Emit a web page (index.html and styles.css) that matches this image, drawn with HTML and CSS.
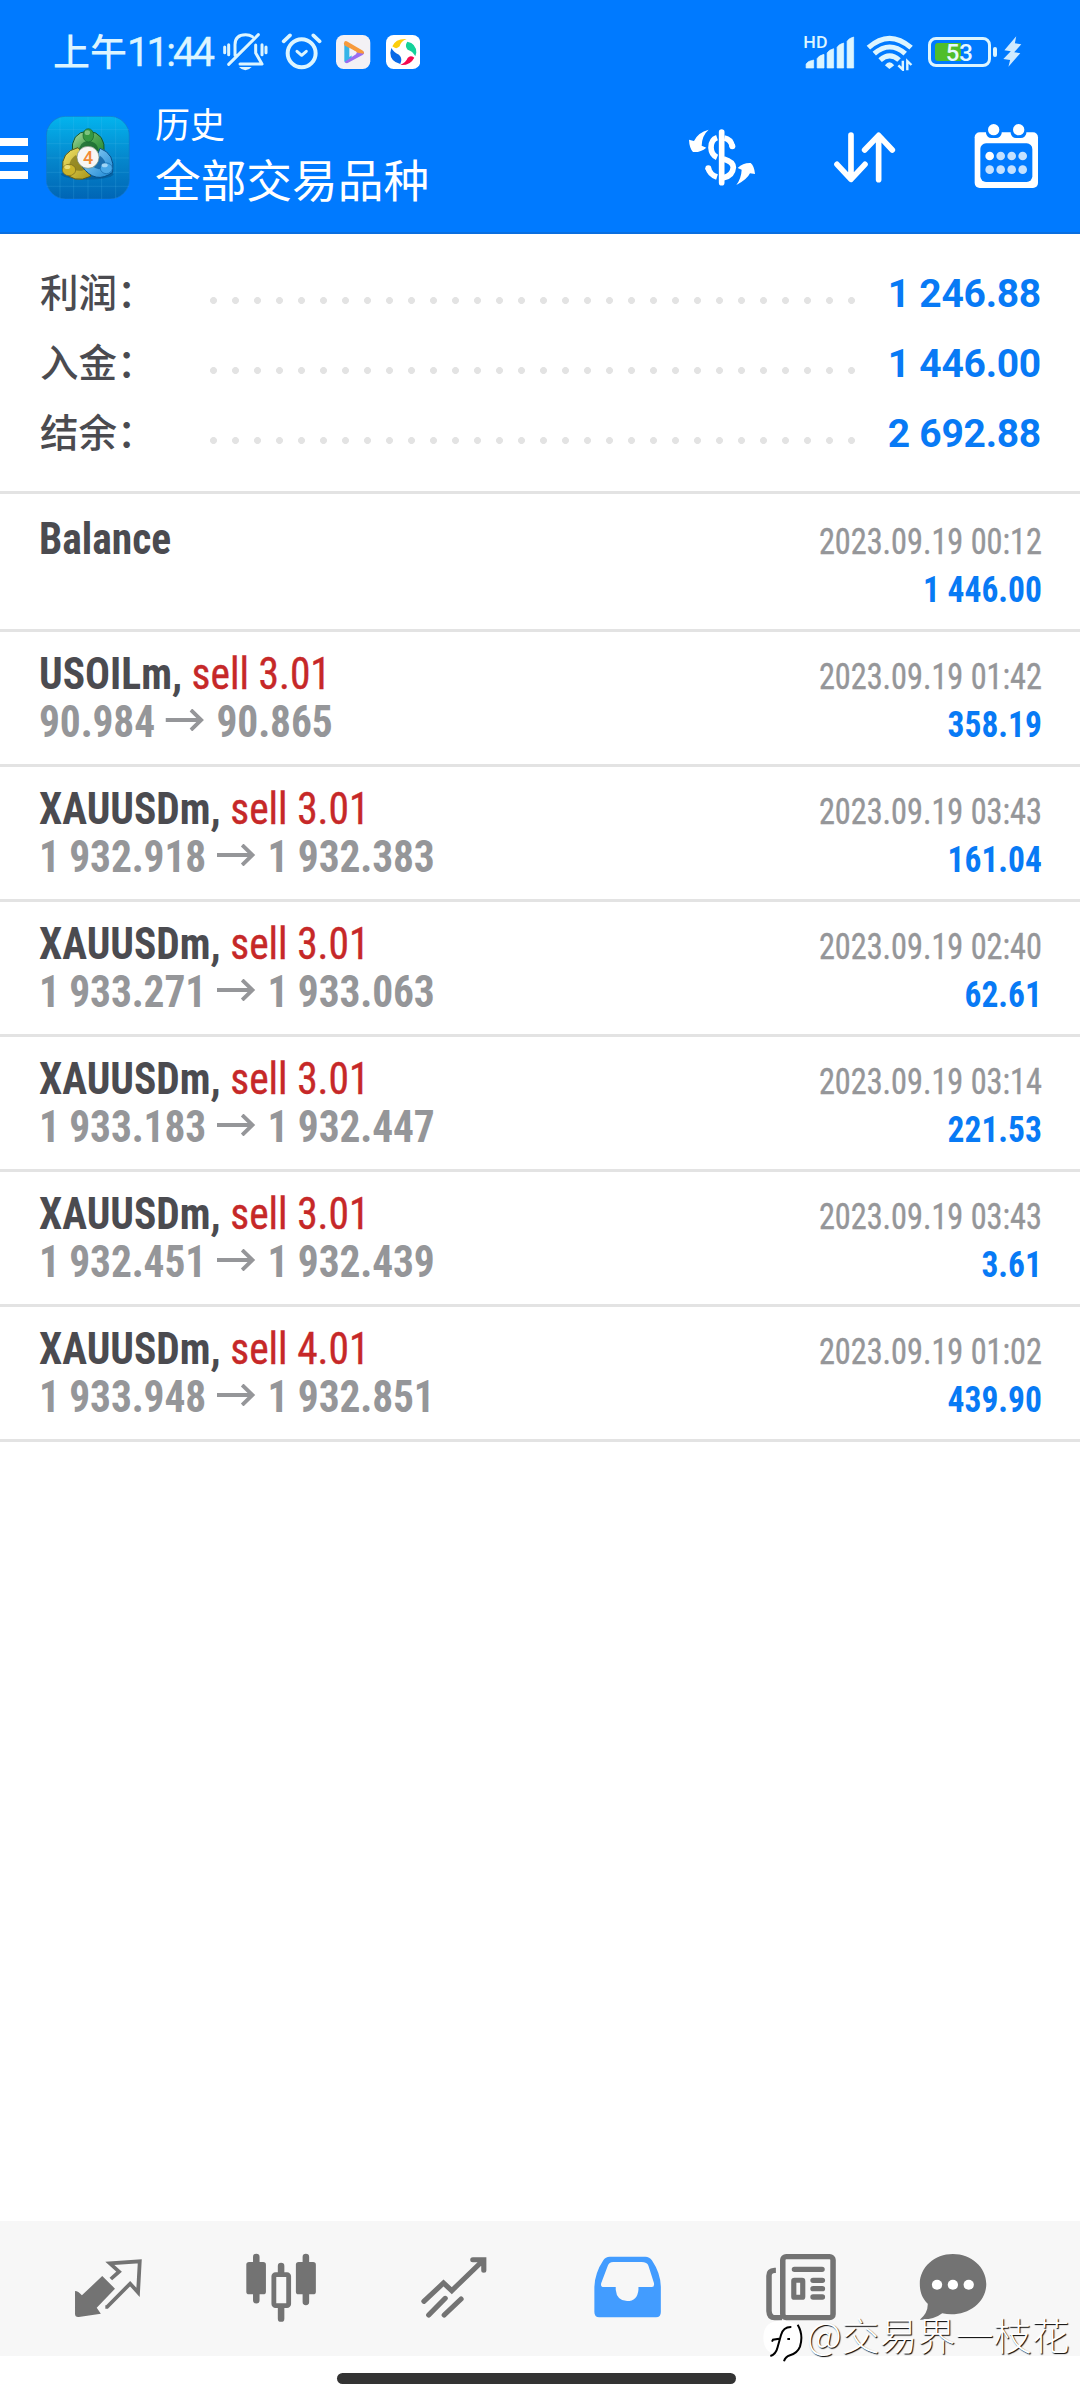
FILE: index.html
```html
<!DOCTYPE html>
<html lang="zh-CN">
<head>
<meta charset="utf-8">
<title>历史</title>
<link rel="stylesheet" href="styles.css">
</head>
<body>
<div class="screen">
  <header class="header">
    <div class="status">
      <span class="clock">上午<span class="digits">11:44</span></span>
      <svg class="bell" viewBox="20 38 140 120" fill="none" stroke="#dcf5ff" stroke-width="9" stroke-linecap="round" stroke-linejoin="round">
        <path d="M59 108V76q0-30 32-30 12 0 20 6M121 77v24l19 33H74M129 46 40 135M28 83v17M40 76v30M140 76v30M152 83v17"/>
        <path d="M71 143h38q-19 20-38 0z" fill="#dcf5ff" stroke="none"/>
      </svg>
      <svg class="alarm" viewBox="198 38 124 115" fill="none" stroke="#dcf5ff" stroke-width="12" stroke-linecap="round">
        <circle cx="260" cy="102" r="42"/>
        <path d="M206 66 225 48M314 66 295 48" stroke-width="11"/>
        <path d="M246 96l14 12 14-12" stroke-width="9" stroke-linejoin="round"/>
      </svg>
      <svg class="app" viewBox="363 45 103 102">
        <rect x="363" y="45" width="103" height="102" rx="23" fill="#f3f1f5"/>
        <path d="M388 68v54q0 8 8 5l14-8V82z" fill="#36b4e8"/>
        <path d="M447 96q2 5-3 8l-46 25q-6 2-9-4l35-23 2-16z" fill="#9b6df0"/>
        <path d="M387 70q1-10 11-5l46 27q5 4 2 9l-18-3-40-22z" fill="#f79a3c"/>
        <path d="M403 83v28l23-14z" fill="#f3f1f5"/>
      </svg>
      <svg class="app app-second" viewBox="512 45 103 102">
        <rect x="512" y="45" width="103" height="102" rx="23" fill="#fff"/>
        <path d="M531 79q10-24 43-22-18 7-21 22-10 11-22 0z" fill="#fcce0c"/>
        <path d="M576 65q27 5 27 33l-3 11q-8-16-23-20-10-11-1-24z" fill="#14d29a"/>
        <path d="M597 113q-12 24-42 22 17-8 22-21 8-10 20-1z" fill="#f5094f"/>
        <path d="M555 132q-30-8-30-34l3-14q8 14 23 20 12 12 4 28z" fill="#0a6ae6"/>
      </svg>
      <svg class="signal" viewBox="764 102 150 108" preserveAspectRatio="none">
        <text x="765" y="144" font-size="48" textLength="70" lengthAdjust="spacingAndGlyphs" class="hd">HD</text>
        <path d="M773 204v-12q4-9 22-12v24zM805 204v-28q4-9 20-13v41zM834 204v-45q4-9 19-13v58zM863 204v-62q4-9 19-13v75zM892 204v-80q4-9 19-13v93z" fill="#dcf5ff" stroke="#dcf5ff" stroke-width="2" stroke-linejoin="round"/>
      </svg>
      <svg class="wifi" viewBox="947 102 138 110" preserveAspectRatio="none" fill="none" stroke="#dcf5ff" stroke-width="15">
        <path d="M954 143q61-56 124 0M971 161q45-40 90 0M988 180q28-25 55 0"/>
        <path d="M1002 196q13-18 27 0l-14 11z" fill="#dcf5ff" stroke="none"/>
        <path d="M1054 182v27l-13-13M1067 211v-28l12 12" stroke-width="7"/>
      </svg>
      <div class="battery"><span class="level"></span><span class="percent">53</span></div>
      <span class="nub"></span>
      <svg class="bolt" viewBox="1346 109 56 94" preserveAspectRatio="none"><path d="M1385 110l-35 42 19 3-22 24 20 3-5 20 35-41-18-3 21-24-19-3z" fill="#cfeaff"/></svg>
    </div>
    <div class="toolbar">
      <div class="menu"><i></i><i></i><i></i></div>
      <svg class="logo" viewBox="138 47 252 250">
        <defs>
          <linearGradient id="sky" x1="0" y1="0" x2="0" y2="1"><stop offset="0" stop-color="#03b4ee"/><stop offset=".5" stop-color="#0588cd"/><stop offset="1" stop-color="#0065b5"/></linearGradient>
          <linearGradient id="green" x1="0" y1="0" x2="1" y2="1"><stop offset="0" stop-color="#b4e0a8"/><stop offset=".5" stop-color="#4fa653"/><stop offset="1" stop-color="#1b8430"/></linearGradient>
          <linearGradient id="gold" x1="0" y1="0" x2="1" y2="1"><stop offset="0" stop-color="#f2e468"/><stop offset="1" stop-color="#a99518"/></linearGradient>
          <linearGradient id="blue" x1="0" y1="0" x2="1" y2="1"><stop offset="0" stop-color="#9cd8fb"/><stop offset="1" stop-color="#1684d2"/></linearGradient>
        </defs>
        <rect x="139" y="48" width="249" height="248" rx="58" fill="url(#sky)" stroke="#1675c9" stroke-width="2"/>
        <path d="M180 50v244M221 49v247M264 49v247M305 49v247M347 50v244M140 88h247M140 130h247M140 173h247M140 216h247M140 258h247" stroke="#5cc5ee" stroke-opacity=".28" stroke-width="2"/>
        <ellipse cx="262" cy="222" rx="78" ry="16" fill="#04487f" opacity=".45"/>
        <path d="M217 158q-6-62 47-66 55 6 48 66l-18 14h-60z" fill="url(#green)" stroke="#12552e" stroke-width="3"/>
        <path d="M236 158q0-34 28-36 32 2 32 36z" fill="#17652f" opacity=".75"/>
        <path d="M234 142q-52 12-46 66 32 46 84 20l-6-48z" fill="url(#gold)" stroke="#565719" stroke-width="3"/>
        <path d="M228 164q-22 14-20 36 22 18 46 8z" fill="#7d7318" opacity=".7"/>
        <path d="M300 144q46 16 38 72-52 38-92-18l38-10z" fill="url(#blue)" stroke="#074d87" stroke-width="3"/>
        <path d="M300 166q20 14 16 34-22 14-38-2z" fill="#0a5b9c" opacity=".75"/>
        <ellipse cx="265" cy="105" rx="16" ry="20" fill="#359842" stroke="#14602c" stroke-width="2"/>
        <ellipse cx="207" cy="209" rx="20" ry="17" fill="#cbb42b" stroke="#71651a" stroke-width="2"/>
        <ellipse cx="319" cy="204" rx="18" ry="16" fill="#48a7e7" stroke="#1267a9" stroke-width="2"/>
        <ellipse cx="262" cy="97" rx="8" ry="7" fill="#9dd59a" opacity=".7"/>
        <ellipse cx="202" cy="200" rx="9" ry="6" fill="#f3e88c" opacity=".8"/>
        <ellipse cx="314" cy="195" rx="9" ry="6" fill="#b5e1fb" opacity=".8"/>
        <circle cx="264" cy="171" r="33" fill="#f8f6f4" stroke="#768c79" stroke-width="2"/>
        <text x="264" y="190" text-anchor="middle" class="four">4</text>
      </svg>
      <div class="titles"><div class="subtitle">历史</div><div class="title">全部交易品种</div></div>
      <svg class="act dollar" viewBox="24 38 204 198">
        <path d="M86 58Q54 66 42 92l-15-4q1 25 12 37 22 2 40-13l-14-6q1-31 21-48zM169 224q32-16 41-35l15 2q-2-24-13-33-23-1-39 15l12 5q-1 25-16 46z" fill="#fff"/>
        <path d="M125 65v152" stroke="#fff" stroke-width="17" stroke-linecap="round"/>
        <path d="M111 82q-18 6-18 30 1 22 18 29M84 172q5 21 27 28" fill="none" stroke="#fff" stroke-width="17"/>
        <circle cx="85" cy="174" r="9" fill="#fff"/>
        <path d="M133 83q19 3 24 25M131 146q28 8 29 25-2 26-29 31" fill="none" stroke="#fff" stroke-width="17"/>
        <circle cx="157" cy="108" r="9" fill="#fff"/>
      </svg>
      <svg class="act sort" viewBox="460 38 190 198" fill="none" stroke="#fff" stroke-width="17" stroke-linecap="round" stroke-linejoin="round"><path d="M514 74v132M472 162l42 45 42-45M597 208V76M555 119l42-44 41 44"/></svg>
      <svg class="act calendar" viewBox="883 38 194 198">
        <rect x="885" y="66" width="190" height="167" rx="15" fill="#fff"/>
        <rect x="902" y="99" width="156" height="116" rx="17" fill="#007aff"/>
        <path d="M919 62v7q3 14 16 14h14q14 0 17-14v-7zM993 62v7q3 14 16 14h14q14 0 17-14v-7z" fill="#007aff"/>
        <circle cx="942" cy="58" r="17" fill="#fff"/><circle cx="1017" cy="58" r="17" fill="#fff"/>
        <circle cx="930" cy="137" r="13" fill="#fff"/>
        <g fill="#c4e1ff"><circle cx="963" cy="137" r="13"/><circle cx="996" cy="137" r="13"/><circle cx="1029" cy="137" r="13"/><circle cx="930" cy="178" r="13"/><circle cx="963" cy="178" r="13"/><circle cx="996" cy="178" r="13"/><circle cx="1029" cy="178" r="13"/></g>
      </svg>
    </div>
  </header>

  <section class="summary">
    <div class="sum-row"><span class="label">利润：</span><span class="dots"></span><span class="total">1 246.88</span></div>
    <div class="sum-row"><span class="label">入金：</span><span class="dots"></span><span class="total">1 446.00</span></div>
    <div class="sum-row"><span class="label">结余：</span><span class="dots"></span><span class="total">2 692.88</span></div>
  </section>

  <main class="list">
    <div class="row"><div class="left"><div><b>Balance</b></div></div><div class="right"><div class="date">2023.09.19 00:12</div><div class="profit">1 446.00</div></div></div>
    <div class="row"><div class="left"><div><b>USOILm,</b> <span class="sell">sell 3.01</span></div><div class="prices">90.984<svg class="arrow" viewBox="0 0 42 22"><path d="M0 11H38M27 1l11 10-11 10"/></svg>90.865</div></div><div class="right"><div class="date">2023.09.19 01:42</div><div class="profit">358.19</div></div></div>
    <div class="row"><div class="left"><div><b>XAUUSDm,</b> <span class="sell">sell 3.01</span></div><div class="prices">1 932.918<svg class="arrow" viewBox="0 0 42 22"><path d="M0 11H38M27 1l11 10-11 10"/></svg>1 932.383</div></div><div class="right"><div class="date">2023.09.19 03:43</div><div class="profit">161.04</div></div></div>
    <div class="row"><div class="left"><div><b>XAUUSDm,</b> <span class="sell">sell 3.01</span></div><div class="prices">1 933.271<svg class="arrow" viewBox="0 0 42 22"><path d="M0 11H38M27 1l11 10-11 10"/></svg>1 933.063</div></div><div class="right"><div class="date">2023.09.19 02:40</div><div class="profit">62.61</div></div></div>
    <div class="row"><div class="left"><div><b>XAUUSDm,</b> <span class="sell">sell 3.01</span></div><div class="prices">1 933.183<svg class="arrow" viewBox="0 0 42 22"><path d="M0 11H38M27 1l11 10-11 10"/></svg>1 932.447</div></div><div class="right"><div class="date">2023.09.19 03:14</div><div class="profit">221.53</div></div></div>
    <div class="row"><div class="left"><div><b>XAUUSDm,</b> <span class="sell">sell 3.01</span></div><div class="prices">1 932.451<svg class="arrow" viewBox="0 0 42 22"><path d="M0 11H38M27 1l11 10-11 10"/></svg>1 932.439</div></div><div class="right"><div class="date">2023.09.19 03:43</div><div class="profit">3.61</div></div></div>
    <div class="row"><div class="left"><div><b>XAUUSDm,</b> <span class="sell">sell 4.01</span></div><div class="prices">1 933.948<svg class="arrow" viewBox="0 0 42 22"><path d="M0 11H38M27 1l11 10-11 10"/></svg>1 932.851</div></div><div class="right"><div class="date">2023.09.19 01:02</div><div class="profit">439.90</div></div></div>
  </main>

  <nav class="tabs">
    <svg viewBox="64 63 502.4 405" preserveAspectRatio="none">
      <path d="M297 228l37 38-53 57 12 18-64 10q-11 1-11-9v-69q9 0 20 13z" fill="#737373" stroke-linejoin="round"/>
      <path d="M322 237l24-22-27-25 87-6-5 93-23-26-67 70h-5" fill="none" stroke="#737373" stroke-width="11"/>
    </svg>
    <svg viewBox="566 63 502.4 405" preserveAspectRatio="none">
      <path d="M744 171v130M888 171v135M816 198v24M816 320v36" stroke="#737373" stroke-width="19" stroke-linecap="round"/>
      <rect x="715" y="186" width="57" height="97" rx="8" fill="#737373"/><rect x="859" y="186" width="58" height="97" rx="8" fill="#737373"/>
      <rect x="795" y="224" width="43" height="93" rx="5" fill="#f7f7f7" stroke="#737373" stroke-width="14"/>
    </svg>
    <svg viewBox="1068.7 63 502.4 405" preserveAspectRatio="none">
      <path d="M1231 304l57-55 24 23 90-90M1373 179h32v32M1245 345l48-50M1290 345l49-48" fill="none" stroke="#737373" stroke-width="15" stroke-linecap="round"/>
    </svg>
    <svg viewBox="3 63 502.4 405" preserveAspectRatio="none">
      <path d="M203 170h103q12 0 19 11 25 38 26 79v76q0 16-14 16H172q-14 0-14-16v-76q2-42 26-79 6-11 19-11z" fill="#429cff"/>
      <path d="M213 186h82q16 0 20 11l16 52q2 12-6 12h-39v8q-3 34-33 34-30-1-33-34v-8h-35q-10 0-7-12l19-52q3-10 16-11z" fill="#f7f7f7"/>
    </svg>
    <svg viewBox="505.3 63 505.3 405" preserveAspectRatio="none">
      <path d="M685 211h-4q-16 1-16 16v106q1 20 16 20h22" fill="none" stroke="#737373" stroke-width="16"/>
      <rect x="705" y="170" width="146" height="183" rx="10" fill="none" stroke="#737373" stroke-width="16"/>
      <path d="M739 208h80M793 241h27M793 266h27M793 291h27" stroke="#737373" stroke-width="16" stroke-linecap="round"/>
      <rect x="737" y="241" width="26" height="51" rx="2" fill="#f7f7f7" stroke="#737373" stroke-width="15"/>
    </svg>
    <svg viewBox="1010.6 63 377.5 405" preserveAspectRatio="none">
      <path d="M1199 162c53 0 97 39 97 90 0 62-65 103-128 88q-24 20-65 19 24-21 23-48c-15-15-23-33-23-59 0-51 43-90 96-90z" fill="#737373"/>
      <circle cx="1153" cy="254" r="15" fill="#fff"/><circle cx="1199" cy="254" r="15" fill="#fff"/><circle cx="1245" cy="254" r="15" fill="#fff"/>
    </svg>
  </nav>
  <div class="gesture"><span></span></div>

  <div class="watermark">
    <svg viewBox="6 26 126 138">
      <path d="M68 34q-57-2-58 49 0 45 35 52l24 7 2 17q5-14 17-17 38-10 38-55 0-49-58-53z" fill="#fff"/>
      <path d="M113 46q18 30 7 66-8 20-30 26-14 4-18 18" fill="none" stroke="#000" stroke-width="6"/>
      <path d="M94 53q-24-1-31 24l-10 36q-5 22-22 27M36 97l3-6 18-3M82 89h8" fill="none" stroke="#000" stroke-width="6"/>
    </svg>
    <span>@交易界一枝花</span>
  </div>
</div>
</body>
</html>
```
FILE: styles.css
```css
* { box-sizing: border-box; }
body { margin: 0; background: #fff; font-family: Roboto, "Noto Sans CJK SC", sans-serif; }
.screen { position: relative; width: 1080px; height: 2400px; display: flex; flex-direction: column; overflow: hidden; }
svg { display: block; flex: none; }

.header { height: 234px; background: #007aff; border-bottom: 2px solid #0a6fe0; flex: none; }
.status { display: flex; align-items: flex-start; height: 100px; padding: 32px 0 0 53px; }
.clock { width: 169px; height: 40px; padding-top: 1px; line-height: 40px; font-size: 37px; font-weight: 500; color: #dcf5ff; white-space: nowrap; }
.digits { font-size: 40px; font-weight: 400; letter-spacing: -2.9px; -webkit-text-stroke: .4px #dcf5ff; }
.bell { width: 46.7px; height: 40px; }
.alarm { width: 41.3px; height: 38.3px; margin-left: 12.3px; }
.app { width: 34.3px; height: 34px; margin: 3px 0 0 14px; }
.app-second { margin-left: 15.4px; }
.signal { width: 51.7px; height: 36px; margin: 2px 0 0 382.6px; }
.hd { font-family: Roboto, sans-serif; font-weight: 500; fill: #dcf5ff; }
.wifi { width: 47.5px; height: 36.7px; margin: 2px 0 0 11.4px; }
.battery { position: relative; width: 63px; height: 30px; margin: 5px 0 0 14.4px; border: 3px solid #dcf5ff; border-radius: 8px; text-align: center; }
.level { display: block; width: 26px; height: 18px; margin: 3px 0 0 4px; border-radius: 3px 0 0 3px; background: #4fbe2b; }
.percent { position: absolute; inset: 0; font: 500 24px/26px Roboto, sans-serif; color: #e6f9ff; }
.nub { width: 4px; height: 10px; margin: 15px 0 0 2px; border-radius: 2px; background: #dcf5ff; }
.bolt { width: 19px; height: 31px; margin: 4px 0 0 6.5px; }

.toolbar { display: flex; height: 132px; align-items: flex-start; }
.menu { display: flex; flex-direction: column; gap: 9px; width: 28px; margin-top: 38px; }
.menu i { height: 7.7px; background: #fff; }
.logo { width: 84px; height: 83.3px; margin: 15.7px 0 0 18px; }
.four { font: 500 54px Roboto, sans-serif; fill: #f28a35; }
.titles { width: 534px; margin-left: 25px; padding-top: 3px; color: #fff; white-space: nowrap; }
.subtitle { height: 49px; font-size: 35px; line-height: 48px; }
.title { height: 62px; font-size: 45.7px; line-height: 62px; }
.act { height: 66px; margin-top: 22.7px; }
.dollar { width: 68px; margin-left: -1px; }
.sort { width: 63.3px; margin-left: 77.3px; }
.calendar { width: 64.7px; margin-left: 77.7px; }

.summary { height: 260px; padding: 21px 39px 0 40px; border-bottom: 3px solid #e3e3e3; flex: none; }
.sum-row { display: flex; align-items: baseline; height: 70px; line-height: 70px; }
.label { width: 170px; font-family: "Noto Sans CJK SC", sans-serif; font-size: 38.5px; font-weight: 500; line-height: 70px; color: #4b4b50; }
.dots { width: 645px; height: 10px; background: radial-gradient(circle at 3.5px 3.5px, #e3e3e3 3.1px, transparent 3.8px) 0 0 / 22px 10px; }
.total { flex: 1; text-align: right; font-size: 39px; font-weight: 700; letter-spacing: -.25px; color: #087af5; white-space: nowrap; }

.list { padding-top: 3px; flex: 1; font-family: "Roboto Condensed", Roboto, sans-serif; }
.row { display: flex; justify-content: space-between; align-items: baseline; height: 135px; padding: 18px 38px 0 39px; border-bottom: 3px solid #e3e3e3; line-height: 48px; white-space: nowrap; }
.left { font-size: 44.5px; color: #4b4b50; transform: scaleX(.932); transform-origin: 0 0; }
.left div { height: 48px; }
.sell { color: #c62828; -webkit-text-stroke: .4px #c62828; }
.prices { color: #959699; font-weight: 700; letter-spacing: -.15px; }
.arrow { display: inline-block; width: 44px; height: 22px; margin: 0 11px; vertical-align: 6px; }
.arrow path { fill: none; stroke: #959699; stroke-width: 4; }
.right { font-size: 36px; text-align: right; }
.date, .profit { transform-origin: 100% 0; }
.date { color: #959699; transform: scaleX(.896); -webkit-text-stroke: .4px #959699; }
.profit { color: #087af5; font-weight: 700; transform: scaleX(.93); }

.tabs { display: grid; grid-template-columns: 173px 173px 173px 173px 174px 130px; height: 135px; padding-left: 22px; background: #f7f7f7; flex: none; }
.tabs svg { width: 100%; height: 135px; }
.gesture { height: 44px; padding: 17px 0 0 337px; flex: none; }
.gesture span { display: block; width: 399px; height: 11px; border-radius: 6px; background: #333; }

.watermark { position: absolute; left: 762px; top: 2318px; display: flex; white-space: nowrap; }
.watermark svg { width: 42px; height: 46px; }
.watermark span { margin: -3px 0 0 3px; font: 300 38px/38px "Noto Sans CJK SC", sans-serif; color: #fff; text-shadow: 1px 1px 1px #000; }
```
